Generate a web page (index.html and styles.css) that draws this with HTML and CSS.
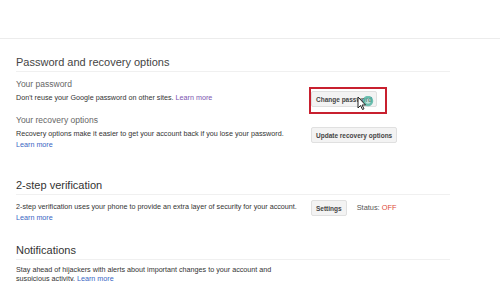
FILE: index.html
```html
<!DOCTYPE html>
<html lang="en">
<head>
    <meta charset="UTF-8">
    <meta name="viewport" content="width=device-width, initial-scale=1.0">
    <title>Security settings</title>
    <link rel="stylesheet" href="styles.css">
</head>
<body>
    <div class="page">
        <div class="topbar"></div>
        <div class="content">
            <div class="section">
                <h2 class="section-title">Password and recovery options</h2>
                <div class="item">
                    <h3 class="item-title">Your password</h3>
                    <div class="row">
                        <p class="row-text">Don't reuse your Google password on other sites. <a class="visited" href="#">Learn more</a></p>
                        <button class="btn">Change password</button>
                    </div>
                </div>
                <div class="item">
                    <h3 class="item-title">Your recovery options</h3>
                    <div class="row">
                        <p class="row-text">Recovery options make it easier to get your account back if you lose your password. <a href="#">Learn more</a></p>
                        <button class="btn">Update recovery options</button>
                    </div>
                </div>
            </div>

            <div class="section section-two">
                <h2 class="section-title">2-step verification</h2>
                <div class="row">
                    <p class="row-text">2-step verification uses your phone to provide an extra layer of security for your account. <a href="#">Learn more</a></p>
                    <button class="btn">Settings</button>
                    <span class="status">Status: <span class="off">OFF</span></span>
                </div>
            </div>

            <div class="section section-three">
                <h2 class="section-title">Notifications</h2>
                <div class="row">
                    <p class="row-text">Stay ahead of hijackers with alerts about important changes to your account and suspicious activity. <a href="#">Learn more</a></p>
                </div>
            </div>
        </div>

        <!-- annotation over the button -->
        <div class="highlight"></div>
        <svg class="cursor" width="22" height="16" viewBox="0 0 22 16">
            <circle cx="11" cy="5" r="4" fill="#8fd0c2" fill-opacity="0.5" stroke="#4fb3a0" stroke-opacity="0.8" stroke-width="2.5"/>
            <path d="M1 1 L1 12 L3.5 9.5 L5.5 13.5 L7 12.8 L5 9 L8.5 9 Z" fill="#fff" stroke="#222" stroke-width="1"/>
        </svg>
    </div>
</body>
</html>
```

FILE: styles.css
```css
body {
    margin: 0;
    font-family: "Liberation Sans", Arial, sans-serif;
    background-color: #fff;
    color: #333;
}

.page {
    position: relative;
    width: 500px;
    height: 281px;
    overflow: hidden;
}

.topbar {
    height: 38px;
    border-bottom: 1px solid #ececec;
}

.content {
    width: 434px;
    padding-left: 16px;
}

.section-title {
    margin: 16px 0 0;
    padding-bottom: 2px;
    font-size: 11px;
    line-height: 14px;
    font-weight: normal;
    color: #444;
    border-bottom: 1px solid #f0f0f0;
}

.section-two .section-title {
    margin-top: 28px;
    color: #333;
}

.section-three .section-title {
    margin-top: 20px;
    color: #333;
}

.item-title {
    margin: 6px 0 0;
    font-size: 8.5px;
    line-height: 12px;
    font-weight: normal;
    color: #666;
}

.item + .item .item-title {
    margin-top: 7px;
}

.row {
    display: flex;
    align-items: flex-start;
    margin-top: 1px;
}

.section-two .row {
    margin-top: 5px;
}

.section-three .row {
    margin-top: 4px;
}

.row-text {
    width: 285px;
    margin: 0 10px 0 0;
    padding-top: 1px;
    font-size: 7.2px;
    line-height: 11px;
    color: #333;
}

.section-three .row-text {
    line-height: 9px;
}

.row-text a {
    color: #3866c4;
    text-decoration: none;
}

.row-text a.visited {
    color: #7b54b0;
}

.btn {
    height: 16px;
    padding: 0 4px;
    font-family: "Liberation Sans", Arial, sans-serif;
    font-size: 6.5px;
    font-weight: bold;
    color: #444;
    background-color: #f3f3f3;
    border: 1px solid #e0e0e0;
    border-radius: 2px;
}

.status {
    margin-left: 10px;
    padding-top: 2px;
    font-size: 7.4px;
    line-height: 11px;
    color: #555;
}

.off {
    color: #dd4b39;
}

.highlight {
    position: absolute;
    left: 309px;
    top: 87px;
    width: 74px;
    height: 23px;
    border: 2px solid #c8202f;
}

.cursor {
    position: absolute;
    left: 357px;
    top: 96px;
}
```
